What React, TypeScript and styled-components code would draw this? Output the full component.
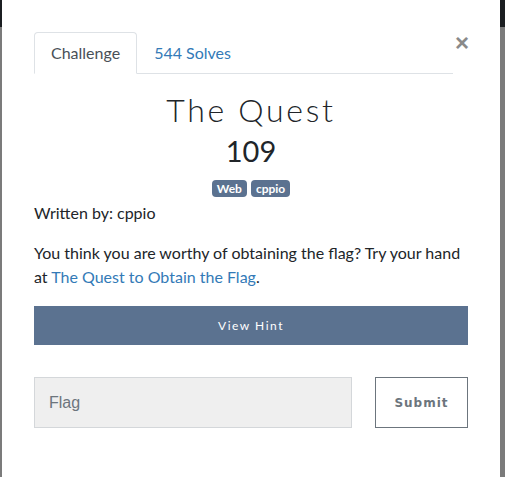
import React from "react";
import styled, { createGlobalStyle } from "styled-components";

const Global = createGlobalStyle`
  html, body { margin: 0; padding: 0; }
  body {
    width: 505px;
    height: 477px;
    overflow: hidden;
    font-family: Lato, "Liberation Sans", sans-serif;
    background: #7b7b7b;
  }
  * { box-sizing: border-box; }
`;

const Page = styled.div`
  position: relative;
  width: 505px;
  height: 477px;
  display: flex;
  flex-direction: column;
`;

const NavBar = styled.div`
  height: 27px;
  background: #1b1e21;
`;

const Backdrop = styled.div`
  flex: 1;
  background: #7b7b7b;
`;

const Modal = styled.div`
  position: absolute;
  top: 0;
  left: 2px;
  width: 498px;
  height: 477px;
  background: #fff;
  padding: 32px 32px 0 32px;
  color: #212529;
`;

const Header = styled.div`
  display: flex;
  align-items: flex-start;
`;

const Tabs = styled.ul`
  list-style: none;
  margin: 0;
  padding: 0;
  display: flex;
  flex: 0 0 419px;
  border-bottom: 1px solid #dee2e6;
`;

const Tab = styled.li<{ $active?: boolean }>`
  margin-bottom: -1px;
  padding: 8px 16px;
  height: 42px;
  font-size: 16px;
  line-height: 24px;
  border: 1px solid ${(p) => (p.$active ? "#dee2e6" : "transparent")};
  border-bottom-color: ${(p) => (p.$active ? "#fff" : "transparent")};
  border-radius: 4px 4px 0 0;
  background: ${(p) => (p.$active ? "#fff" : "transparent")};
  color: ${(p) => (p.$active ? "#495057" : "#337ab7")};
`;

const Close = styled.button`
  margin-left: 0;
  border: none;
  background: none;
  padding: 0 0 0 2px;
  font-family: "Liberation Sans", Arial, sans-serif;
  font-size: 24px;
  font-weight: 700;
  line-height: 22px;
  color: #8a8a8a;
`;

const Title = styled.h2`
  margin: 17px 0 0;
  text-align: center;
  font-family: Lato, sans-serif;
  font-weight: 300;
  font-size: 32px;
  line-height: 38px;
  letter-spacing: 2.7px;
  color: #212529;
`;

const Score = styled.h3`
  margin: 5px 0 0;
  text-align: center;
  font-weight: 400;
  font-size: 29px;
  line-height: 34px;
  color: #212529;
`;

const Tags = styled.div`
  display: flex;
  justify-content: center;
  gap: 4px;
  margin-top: 12px;
`;

const Badge = styled.span`
  background: #5b7290;
  color: #fff;
  font-size: 12px;
  font-weight: 700;
  line-height: 13px;
  padding: 2px 5px 2px;
  border-radius: 4px;
`;

const Author = styled.p`
  margin: 4px 0 0;
  font-size: 16px;
  line-height: 24px;
`;

const Description = styled.p`
  margin: 16px 0 0;
  font-size: 16px;
  line-height: 24px;
`;

const Link = styled.a`
  color: #337ab7;
  text-decoration: none;
`;

const HintButton = styled.button`
  display: block;
  width: 100%;
  height: 39px;
  margin-top: 17px;
  border: none;
  background: #5b7290;
  color: #fff;
  font-family: Lato, sans-serif;
  font-size: 12px;
  letter-spacing: 1.5px;
`;

const SubmitRow = styled.div`
  display: grid;
  grid-template-columns: 318px 1fr;
  gap: 23px;
  margin-top: 32px;
`;

const FlagInput = styled.input`
  height: 51px;
  background: #efefef;
  border: 1px solid #d4d7da;
  padding: 0 14px;
  font-family: "Liberation Sans", Arial, sans-serif;
  font-size: 16px;
  color: #495057;
  &::placeholder { color: #6c757d; }
`;

const SubmitButton = styled.button`
  height: 51px;
  background: #fff;
  border: 1px solid #6c757d;
  color: #6c757d;
  font-family: "DejaVu Sans", sans-serif;
  font-size: 12px;
  font-weight: 700;
  letter-spacing: 1px;
`;

export default function App() {
  return (
    <>
      <Global />
      <Page>
        <NavBar />
        <Backdrop />
        <Modal>
          <Header>
            <Tabs>
              <Tab $active>Challenge</Tab>
              <Tab>544 Solves</Tab>
            </Tabs>
            <Close>×</Close>
          </Header>
          <Title>The Quest</Title>
          <Score>109</Score>
          <Tags>
            <Badge>Web</Badge>
            <Badge>cppio</Badge>
          </Tags>
          <Author>Written by: cppio</Author>
          <Description>
            You think you are worthy of obtaining the flag? Try your hand at{" "}
            <Link href="#">The Quest to Obtain the Flag</Link>.
          </Description>
          <HintButton>View Hint</HintButton>
          <SubmitRow>
            <FlagInput placeholder="Flag" />
            <SubmitButton>Submit</SubmitButton>
          </SubmitRow>
        </Modal>
      </Page>
    </>
  );
}
